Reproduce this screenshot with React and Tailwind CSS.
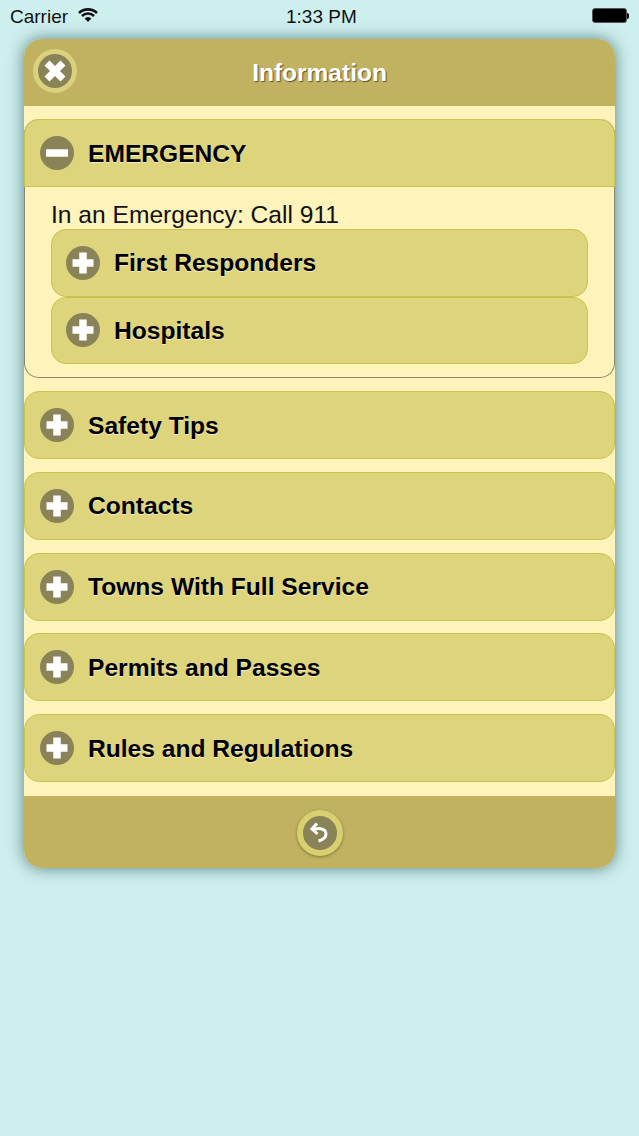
const font = "font-['Liberation_Sans',Arial,sans-serif]";

function CircleIcon({ type }) {
  return (
    <svg width="34" height="34" viewBox="0 0 34 34" className="shrink-0">
      <circle cx="17" cy="17" r="17" fill="#8a8358" />
      {type === "plus" && (
        <path d="M17 6.5v21M6.5 17h21" stroke="#fff" strokeWidth="7.5" />
      )}
      {type === "minus" && <path d="M6 17h22" stroke="#fff" strokeWidth="7.5" />}
    </svg>
  );
}

function Row({ label, nested }) {
  return (
    <div
      className={`flex items-center shrink-0 bg-[#ded47b] border border-[#c9c24f] gap-[14px] rounded-[15px] ${nested ? "h-[67.5px] pl-[14px]" : "h-[68px] pl-[15px]"}`}
    >
      <CircleIcon type="plus" />
      <span className="pt-[2px] text-[24.6px] font-bold text-black [text-shadow:0_1px_1px_rgba(255,255,255,0.6)]">
        {label}
      </span>
    </div>
  );
}

export default function App() {
  return (
    <div className={`w-[639px] h-[1136px] bg-[#cdefee] overflow-hidden ${font}`}>
      {/* status bar */}
      <div className="h-[39px] flex items-start pl-[10px] pt-[3px] text-[#111] text-[19px]">
        <span className="w-[59px]">Carrier</span>
        <svg width="20" height="16" viewBox="0 0 20 16" className="ml-[9px] mt-[4px]">
          <path d="M1 6a13 13 0 0 1 18 0M4 9a8.6 8.6 0 0 1 12 0" fill="none" stroke="#111" strokeWidth="2.6" />
          <path d="M6.6 11.4a4.6 4.6 0 0 1 6.8 0L10 15z" fill="#111" />
        </svg>
        <span className="ml-[188px] w-[72px] whitespace-nowrap">1:33 PM</span>
        <div className="flex items-center mt-[5px] ml-[234px]">
          <div className="w-[35px] h-[15px] bg-black rounded-[3px] border border-[#555]" />
          <div className="w-[2px] h-[6px] bg-black rounded-r" />
        </div>
      </div>

      {/* panel */}
      <div className="ml-[24px] w-[591px] h-[829px] rounded-[18px] overflow-hidden flex flex-col bg-[#fdf3bb] shadow-[0_0_16px_rgba(30,70,70,0.65)]">
        <div className="h-[67px] shrink-0 bg-[#c0b261] flex items-center relative">
          <div className="absolute left-[9px] top-[10px] w-[44px] h-[44px] rounded-full bg-[#8a8358] border-[5px] border-[#d9d17c] flex items-center justify-center">
            <svg width="26" height="26" viewBox="0 0 26 26">
              <path d="M5 5l16 16M21 5L5 21" stroke="#fff" strokeWidth="7" />
            </svg>
          </div>
          <span className="w-full pt-[1px] text-center text-white font-bold text-[24.5px] [text-shadow:1px_1px_1px_rgba(70,60,20,0.8)]">
            Information
          </span>
        </div>

        <div className="flex-1 pt-[13px] flex flex-col gap-[12.75px]">
          <div className="h-[259.25px] shrink-0 rounded-[15px] border-b border-x border-[#8a8670] bg-[#fdf3bb]">
            <div className="h-[68px] mx-[-1px] flex items-center pl-[15px] gap-[14px] bg-[#ded47b] border border-[#c9c24f] rounded-t-[15px]">
              <CircleIcon type="minus" />
              <span className="pt-[2px] text-[24.6px] font-bold text-black [text-shadow:0_1px_1px_rgba(255,255,255,0.6)]">
                EMERGENCY
              </span>
            </div>
            <div className="px-[26px]">
              <div className="text-[24.6px] leading-[42px] h-[42px] pt-[7px] whitespace-nowrap text-[#111]">In an Emergency: Call 911</div>
              <Row label="First Responders" nested />
              <Row label="Hospitals" nested />
            </div>
          </div>
          <Row label="Safety Tips" />
          <Row label="Contacts" />
          <Row label="Towns With Full Service" />
          <Row label="Permits and Passes" />
          <Row label="Rules and Regulations" />
        </div>

        <div className="h-[72px] shrink-0 bg-[#c0b261] flex items-center justify-center pt-[2px]">
          <div className="w-[46px] h-[46px] rounded-full bg-[#8a8358] border-[6px] border-[#d8d070] flex items-center justify-center shadow-[0_1px_3px_rgba(60,50,10,0.5)]">
            <svg width="26" height="26" viewBox="0 0 26 26" fill="none">
              <path d="M7 9.5c6-2 12-.5 12 4.5 0 4-3.5 6-7.5 7" stroke="#fff" strokeWidth="3" />
              <path d="M10 3.5L5 9l5.5 5" stroke="#fff" strokeWidth="3" />
            </svg>
          </div>
        </div>
      </div>
    </div>
  );
}
